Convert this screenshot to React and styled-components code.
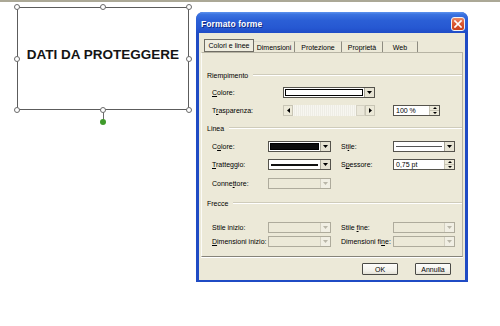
import React from "react";
import styled, { createGlobalStyle } from "styled-components";

const GlobalStyle = createGlobalStyle`
  html, body { margin: 0; padding: 0; background: #fff; }
  body { font-family: "Liberation Sans", Arial, sans-serif; }
  #root { width: 500px; height: 326px; overflow: hidden; }
`;

const Page = styled.div`
  width: 500px;
  height: 326px;
  box-sizing: border-box;
  border-top: 2px solid #aba896;
  display: flex;
  align-items: flex-start;
  padding-left: 17px;
  background: #fff;
`;

/* ---------- Shape on the canvas ---------- */
const Shape = styled.div`
  position: relative;
  flex: none;
  margin-top: 5px;
  width: 172px;
  height: 103px;
  box-sizing: border-box;
  border: 1px solid #5c5c5c;
  display: flex;
  align-items: center;
  justify-content: center;
  padding-bottom: 9px;
`;

const ShapeText = styled.span`
  font-weight: 700;
  font-size: 13.5px;
  color: #141414;
  white-space: nowrap;
`;

const HandleLayer = styled.div`
  position: absolute;
  inset: -1px;
  pointer-events: none;
`;

const Handle = styled.span`
  position: absolute;
  left: ${(p) => p.$x}%;
  top: ${(p) => p.$y}%;
  width: 6px;
  height: 6px;
  box-sizing: border-box;
  transform: translate(-50%, -50%);
  border: 1px solid #6a6a6a;
  border-radius: 50%;
  background: #fff;
`;

const Stem = styled.span`
  position: absolute;
  left: 50%;
  top: 100%;
  width: 1px;
  height: 10px;
  background: #6a6a6a;
`;

const RotateDot = styled.span`
  position: absolute;
  left: 50%;
  top: calc(100% + 12px);
  width: 6px;
  height: 6px;
  transform: translate(-50%, -50%);
  border-radius: 50%;
  background: #3f9b2b;
`;

/* ---------- Dialog window ---------- */
const Dialog = styled.div`
  flex: none;
  margin: 10px 0 0 7px;
  width: 272px;
  height: 270px;
  box-sizing: border-box;
  display: flex;
  flex-direction: column;
  background: #1f4bc4;
  border-radius: 7px 7px 0 0;
  padding: 0 3px 2px;
`;

const TitleBar = styled.div`
  flex: none;
  height: 21px;
  margin: 0 -3px;
  box-sizing: border-box;
  padding: 2px 3px 0 5px;
  display: flex;
  align-items: center;
  justify-content: space-between;
  border-radius: 7px 7px 0 0;
  background: linear-gradient(
    180deg,
    #5d93ee 0%,
    #3a72e0 12%,
    #2b5fd6 40%,
    #2658d2 75%,
    #1f4cc6 100%
  );
`;

const Title = styled.span`
  color: #fff;
  font-weight: 700;
  font-size: 8.5px;
  text-shadow: 1px 1px 0 #0f2a82;
  letter-spacing: 0.1px;
`;

const CloseBtn = styled.span`
  width: 14px;
  height: 14px;
  box-sizing: border-box;
  border: 1px solid #f4f4f4;
  border-radius: 3px;
  background: linear-gradient(180deg, #ec8a66 0%, #dc5a34 45%, #c9401c 100%);
  display: flex;
  align-items: center;
  justify-content: center;
`;

const Client = styled.div`
  flex: 1;
  background: #ece9d8;
  padding: 6px 2px 0;
  display: flex;
  flex-direction: column;
  font-size: 7px;
  color: #000;
`;

const Tabs = styled.div`
  display: flex;
  align-items: flex-end;
  height: 13px;
  margin-left: 3px;
`;

const Tab = styled.div`
  width: ${(p) => p.$w}px;
  height: ${(p) => (p.$active ? 13 : 11)}px;
  box-sizing: border-box;
  display: flex;
  align-items: center;
  justify-content: center;
  white-space: nowrap;
  border-right: 1px solid #8d8b80;
  ${(p) =>
    p.$active
      ? `border: 1px solid #6f6d64; background: #efede0;`
      : `border-top: 1px solid #dddbcd;`}
`;

const Panel = styled.div`
  height: 205px;
  box-sizing: border-box;
  border-top: 1px solid #b7b4a4;
  border-left: 1px solid #fbfbf7;
  border-right: 1px solid #b7b4a4;
  border-bottom: 1px solid #86847a;
  box-shadow: 0 1px 0 #fff;
  padding: 17px 0 0 5px;
  display: flex;
  flex-direction: column;
`;

const GroupHead = styled.div`
  height: 10px;
  margin-top: ${(p) => p.$mt || 0}px;
  display: flex;
  align-items: center;
  gap: 5px;
  white-space: nowrap;
`;

const GroupLine = styled.span`
  flex: 1;
  height: 0;
  border-top: 1px solid #cfccbb;
  border-bottom: 1px solid #fff;
`;

const Row = styled.div`
  height: 11px;
  margin-top: ${(p) => p.$mt}px;
  padding-left: 5px;
  display: flex;
  align-items: center;
`;

const Label = styled.span`
  flex: none;
  width: ${(p) => p.$w}px;
  white-space: nowrap;
  line-height: 11px;
`;

const Gap = styled.span`
  flex: none;
  width: ${(p) => p.$w}px;
`;

const Combo = styled.div`
  flex: none;
  width: ${(p) => p.$w}px;
  height: 11px;
  box-sizing: border-box;
  border: 1px solid ${(p) => (p.$disabled ? "#aeab9c" : "#55534c")};
  background: ${(p) => (p.$disabled ? "#ece9d8" : "#fff")};
  display: flex;
`;

const ComboField = styled.div`
  flex: 1;
  padding: 1px;
  display: flex;
  align-items: center;
`;

const Swatch = styled.div`
  flex: 1;
  align-self: stretch;
  box-sizing: border-box;
  border: 1px solid #000;
  background: ${(p) => p.$color};
`;

const LineSample = styled.div`
  flex: 1;
  margin: 0 1px;
  height: ${(p) => p.$t}px;
  background: ${(p) => p.$c || "#111"};
`;

const ArrowBtn = styled.div`
  flex: none;
  width: 10px;
  box-sizing: border-box;
  border-left: 1px solid ${(p) => (p.$disabled ? "#d3d0c1" : "#a7a597")};
  background: ${(p) => (p.$disabled ? "#f1efe4" : "#e6e3d3")};
  display: flex;
  align-items: center;
  justify-content: center;
`;

const Scroll = styled.div`
  flex: none;
  width: ${(p) => p.$w}px;
  height: 11px;
  display: flex;
  background: #f6f5ee;
`;

const ScrollBtn = styled.div`
  flex: none;
  width: 10px;
  box-sizing: border-box;
  border: 1px solid #c8c5b5;
  background: #ece9d8;
  display: flex;
  align-items: center;
  justify-content: center;
`;

const ScrollTrack = styled.div`
  flex: 1;
  display: flex;
  justify-content: flex-end;
  background: repeating-linear-gradient(90deg, #f7f6f0 0 1px, #eeede5 1px 2px);
`;

const Thumb = styled.div`
  width: 9px;
  box-sizing: border-box;
  border: 1px solid #d5d2c3;
  background: #ebe8da;
`;

const Spin = styled.div`
  flex: none;
  width: ${(p) => p.$w}px;
  height: 11px;
  box-sizing: border-box;
  border: 1px solid #55534c;
  background: #fff;
  display: flex;
`;

const SpinText = styled.span`
  flex: 1;
  padding-left: 2px;
  line-height: 9px;
  white-space: nowrap;
`;

const SpinBtns = styled.div`
  flex: none;
  width: 9px;
  display: flex;
  flex-direction: column;
  border-left: 1px solid #c7c4b4;
`;

const SpinBtn = styled.div`
  flex: 1;
  background: #ece9d8;
  display: flex;
  align-items: center;
  justify-content: center;
  & + & {
    border-top: 1px solid #c7c4b4;
  }
`;

const Footer = styled.div`
  display: flex;
  justify-content: flex-end;
  gap: ${(p) => p.$gap}px;
  margin-top: 6px;
  padding-right: 12px;
`;

const Button = styled.div`
  width: ${(p) => p.$w}px;
  height: 12px;
  box-sizing: border-box;
  border: 1px solid #4a4a46;
  border-radius: 1px;
  background: linear-gradient(180deg, #fdfdfb 0%, #f2f1ea 70%, #e3e1d6 100%);
  display: flex;
  align-items: center;
  justify-content: center;
  font-size: 7px;
`;

/* ---------- tiny glyph drawings ---------- */
const Arrow = ({ dir = "down", color = "#000" }) => {
  const pts = {
    down: "0,0 5,0 2.5,3",
    up: "0,3 5,3 2.5,0",
    left: "3,0 3,5 0,2.5",
    right: "0,0 0,5 3,2.5",
  }[dir];
  const vertical = dir === "down" || dir === "up";
  return (
    <svg
      width={vertical ? 5 : 3}
      height={vertical ? 3 : 5}
      viewBox={vertical ? "0 0 5 3" : "0 0 3 5"}
    >
      <polygon points={pts} fill={color} />
    </svg>
  );
};

const SmallArrow = ({ dir }) => (
  <svg width="4" height="2" viewBox="0 0 4 2">
    <polygon points={dir === "up" ? "0,2 4,2 2,0" : "0,0 4,0 2,2"} fill="#000" />
  </svg>
);

const CloseX = () => (
  <svg width="8" height="8" viewBox="0 0 8 8">
    <path d="M1 1 L7 7 M7 1 L1 7" stroke="#fff" strokeWidth="1.7" strokeLinecap="square" />
  </svg>
);

/* ---------- composite controls ---------- */
const ComboBox = ({ w, disabled, children }) => (
  <Combo $w={w} $disabled={disabled}>
    <ComboField>{children}</ComboField>
    <ArrowBtn $disabled={disabled}>
      <Arrow dir="down" color={disabled ? "#b9b6a8" : "#000"} />
    </ArrowBtn>
  </Combo>
);

const Spinner = ({ w, value }) => (
  <Spin $w={w}>
    <SpinText>{value}</SpinText>
    <SpinBtns>
      <SpinBtn>
        <SmallArrow dir="up" />
      </SpinBtn>
      <SpinBtn>
        <SmallArrow dir="down" />
      </SpinBtn>
    </SpinBtns>
  </Spin>
);

const handles = [
  [0, 0], [50, 0], [100, 0],
  [0, 50], [100, 50],
  [0, 100], [50, 100], [100, 100],
];

export default function App() {
  return (
    <>
      <GlobalStyle />
      <Page>
        <Shape>
          <ShapeText>DATI DA PROTEGGERE</ShapeText>
          <HandleLayer>
            <Stem />
            <RotateDot />
            {handles.map(([x, y]) => (
              <Handle key={`${x}-${y}`} $x={x} $y={y} />
            ))}
          </HandleLayer>
        </Shape>

        <Dialog>
          <TitleBar>
            <Title>Formato forme</Title>
            <CloseBtn>
              <CloseX />
            </CloseBtn>
          </TitleBar>
          <Client>
            <Tabs>
              <Tab $w={50} $active>Colori e linee</Tab>
              <Tab $w={41}>Dimensioni</Tab>
              <Tab $w={47}>Protezione</Tab>
              <Tab $w={41}>Proprietà</Tab>
              <Tab $w={35}>Web</Tab>
            </Tabs>
            <Panel>
              <GroupHead>
                Riempimento
                <GroupLine />
              </GroupHead>
              <Row $mt={7}>
                <Label $w={71}>
                  <u>C</u>olore:
                </Label>
                <ComboBox w={92}>
                  <Swatch $color="#fff" />
                </ComboBox>
              </Row>
              <Row $mt={7}>
                <Label $w={71}>
                  T<u>r</u>asparenza:
                </Label>
                <Scroll $w={92}>
                  <ScrollBtn>
                    <Arrow dir="left" />
                  </ScrollBtn>
                  <ScrollTrack>
                    <Thumb />
                  </ScrollTrack>
                  <ScrollBtn>
                    <Arrow dir="right" />
                  </ScrollBtn>
                </Scroll>
                <Gap $w={18} />
                <Spinner w={47} value="100 %" />
              </Row>

              <GroupHead $mt={7}>
                Linea
                <GroupLine />
              </GroupHead>
              <Row $mt={8}>
                <Label $w={56}>
                  C<u>o</u>lore:
                </Label>
                <ComboBox w={63}>
                  <Swatch $color="#0c0c0c" />
                </ComboBox>
                <Gap $w={10} />
                <Label $w={52}>
                  St<u>i</u>le:
                </Label>
                <ComboBox w={62}>
                  <LineSample $t={1} $c="#555" />
                </ComboBox>
              </Row>
              <Row $mt={7}>
                <Label $w={56}>
                  <u>T</u>ratteggio:
                </Label>
                <ComboBox w={63}>
                  <LineSample $t={2} />
                </ComboBox>
                <Gap $w={10} />
                <Label $w={52}>
                  S<u>p</u>essore:
                </Label>
                <Spinner w={62} value="0,75 pt" />
              </Row>
              <Row $mt={8}>
                <Label $w={56}>
                  Conne<u>t</u>tore:
                </Label>
                <ComboBox w={63} disabled />
              </Row>

              <GroupHead $mt={9}>
                Frecce
                <GroupLine />
              </GroupHead>
              <Row $mt={14}>
                <Label $w={56}>Stile inizio:</Label>
                <ComboBox w={63} disabled />
                <Gap $w={10} />
                <Label $w={52}>
                  Stile <u>f</u>ine:
                </Label>
                <ComboBox w={62} disabled />
              </Row>
              <Row $mt={3}>
                <Label $w={56}>
                  <u>D</u>imensioni inizio:
                </Label>
                <ComboBox w={63} disabled />
                <Gap $w={10} />
                <Label $w={52}>
                  Dimensioni fi<u>n</u>e:
                </Label>
                <ComboBox w={62} disabled />
              </Row>
            </Panel>
            <Footer $gap={17}>
              <Button $w={36}>OK</Button>
              <Button $w={36}>Annulla</Button>
            </Footer>
          </Client>
        </Dialog>
      </Page>
    </>
  );
}
